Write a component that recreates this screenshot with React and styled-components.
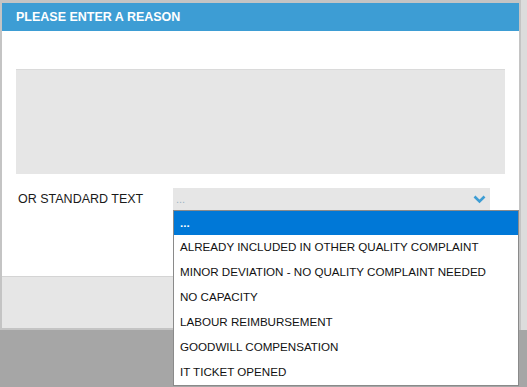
import React from "react";
import styled, { createGlobalStyle } from "styled-components";

const Global = createGlobalStyle`
  html, body {
    margin: 0;
    padding: 0;
    background: #a6a6a6;
    font-family: "Liberation Sans", Arial, sans-serif;
  }
`;

const Screen = styled.div`
  width: 527px;
  height: 387px;
  overflow: hidden;
  position: relative;
  background: #a6a6a6;
`;

const Backdrop = styled.div`
  display: flex;
  background: #dcdcdc;
  width: 527px;
`;

const Dialog = styled.div`
  width: 517px;
  border: 2px solid #c4c4c4;
  border-top-width: 3px;
  background: #fff;
  position: relative;
`;

const Header = styled.div`
  height: 28px;
  background: #3d9dd4;
  color: #fff;
  font-size: 12.5px;
  font-weight: bold;
  line-height: 28px;
  padding-left: 14px;
`;

const Body = styled.div`
  padding: 38px 14px 0 14px;
  height: 207px;
`;

const TextArea = styled.div`
  height: 104px;
  background: #e6e6e6;
  border-top: 1px solid #dadada;
`;

const Row = styled.div`
  display: flex;
  align-items: center;
  margin-top: 14px;
`;

const Label = styled.div`
  flex: 0 0 157px;
  padding-left: 2px;
  box-sizing: border-box;
  font-size: 12.5px;
  color: #1a1a1a;
`;

const Select = styled.div`
  position: relative;
  width: 317px;
  height: 22px;
  background: #e6e6e6;
  display: flex;
  align-items: center;
  justify-content: space-between;
  padding: 0 4px 0 3px;
  box-sizing: border-box;
  color: #9db3c3;
  font-size: 11px;
`;

const Menu = styled.ul`
  position: absolute;
  left: 0;
  top: 22px;
  width: 344px;
  margin: 0;
  padding: 0;
  list-style: none;
  background: #fff;
  border: 1px solid #8a8a8a;
  z-index: 5;
`;

const Item = styled.li`
  height: ${(p) => (p.active ? "24px" : "25px")};
  line-height: 24px;
  padding-left: 6px;
  font-size: 11.6px;
  color: ${(p) => (p.active ? "#fff" : "#111")};
  background: ${(p) => (p.active ? "#0078d7" : "transparent")};
  font-weight: ${(p) => (p.active ? "bold" : "normal")};
`;

const Footer = styled.div`
  height: 51px;
  background: #e6e6e6;
  border-top: 1px solid #d4d4d4;
`;

const items = [
  "ALREADY INCLUDED IN OTHER QUALITY COMPLAINT",
  "MINOR DEVIATION - NO QUALITY COMPLAINT NEEDED",
  "NO CAPACITY",
  "LABOUR REIMBURSEMENT",
  "GOODWILL COMPENSATION",
  "IT TICKET OPENED",
];

function Chevron() {
  return (
    <svg width="13" height="9" viewBox="0 0 13 9">
      <path d="M1.5 1.5 L6.5 6.5 L11.5 1.5" fill="none" stroke="#3d9dd4" strokeWidth="2.6" />
    </svg>
  );
}

export default function App() {
  return (
    <Screen>
      <Global />
      <Backdrop>
        <Dialog>
          <Header>PLEASE ENTER A REASON</Header>
          <Body>
            <TextArea />
            <Row>
              <Label>OR STANDARD TEXT</Label>
              <Select>
                <span>...</span>
                <Chevron />
                <Menu>
                  <Item active>...</Item>
                  {items.map((t) => (
                    <Item key={t}>{t}</Item>
                  ))}
                </Menu>
              </Select>
            </Row>
          </Body>
          <Footer />
        </Dialog>
      </Backdrop>
    </Screen>
  );
}
